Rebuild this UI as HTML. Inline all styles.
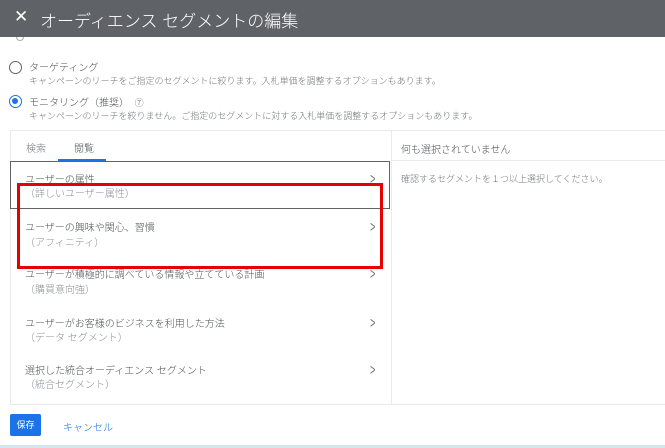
<!DOCTYPE html>
<html><head><meta charset="utf-8"><style>
*{margin:0;padding:0;box-sizing:border-box}
body{width:665px;height:448px;overflow:hidden;background:#fff;font-family:"Liberation Sans","Noto Sans CJK JP",sans-serif;position:relative;color:#3c4043}
.a{position:absolute;white-space:nowrap}
.hdr{left:0;top:0;width:665px;height:37px;background:#5f6368;color:#fff}
.s{font-size:9px;color:#6f7378;font-weight:300}
.t{font-size:10px;color:#4a4e52;font-weight:300}
.sub{font-size:10px;color:#8a8e93;font-weight:300}
.chev{font-size:16px;color:#6f7378;transform:scaleX(.55);font-weight:300}
</style></head><body>
<div class="a hdr"><span class="a" style="left:14px;top:7px;font-size:17px">✕</span><span class="a" style="left:40px;top:7px;font-size:17px;font-weight:300">オーディエンス セグメントの編集</span></div>
<div class="a" style="left:16px;top:37px;width:8px;height:4px;border:1px solid #aaa;border-top:none;border-radius:0 0 5px 5px"></div>
<div class="a" style="left:9px;top:61px;width:13px;height:13px;border:1.5px solid #5f6368;border-radius:50%"></div>
<div class="a t" style="left:29px;top:59px">ターゲティング</div>
<div class="a s" style="left:29px;top:74px">キャンペーンのリーチをご指定のセグメントに絞ります。入札単価を調整するオプションもあります。</div>
<div class="a" style="left:9px;top:95px;width:13px;height:13px;border:1.5px solid #1a73e8;border-radius:50%"><div style="margin:2px;width:6px;height:6px;background:#1a73e8;border-radius:50%"></div></div>
<div class="a t" style="left:29px;top:94px">モニタリング（推奨）&nbsp; <span style="font-size:9px;color:#5f6368">⑦</span></div>
<div class="a s" style="left:29px;top:109px">キャンペーンのリーチを絞りません。ご指定のセグメントに対する入札単価を調整するオプションもあります。</div>
<div class="a" style="left:10px;top:130px;width:655px;height:275px;border:1px solid #e8eaed;border-right:none"></div>
<div class="a" style="left:391px;top:130px;width:1px;height:275px;background:#e8eaed"></div>
<div class="a" style="left:391px;top:160px;width:274px;height:1px;background:#e8eaed"></div>
<div class="a sub" style="left:26px;top:140px;color:#6f7378">検索</div>
<div class="a t" style="left:74px;top:140px">閲覧</div>
<div class="a" style="left:58px;top:159px;width:48px;height:2px;background:#1a73e8"></div>
<div class="a t" style="left:401px;top:141px">何も選択されていません</div>
<div class="a s" style="left:401px;top:172px">確認するセグメントを１つ以上選択してください。</div>
<div class="a" style="left:10px;top:161px;width:380px;height:48px;border:1px solid #5f6368"></div>
<div class="a t" style="left:25px;top:171px">ユーザーの属性</div><div class="a sub" style="left:25px;top:185px">（詳しいユーザー属性）</div><div class="a chev" style="left:368px;top:171px">&gt;</div>
<div class="a t" style="left:25px;top:219px">ユーザーの興味や関心、習慣</div><div class="a sub" style="left:25px;top:234px">（アフィニティ）</div><div class="a chev" style="left:368px;top:219px">&gt;</div>
<div class="a t" style="left:25px;top:266px">ユーザーが積極的に調べている情報や立てている計画</div><div class="a sub" style="left:25px;top:281px">（購買意向強）</div><div class="a chev" style="left:368px;top:266px">&gt;</div>
<div class="a t" style="left:25px;top:315px">ユーザーがお客様のビジネスを利用した方法</div><div class="a sub" style="left:25px;top:329px">（データ セグメント）</div><div class="a chev" style="left:368px;top:315px">&gt;</div>
<div class="a t" style="left:25px;top:362px">選択した統合オーディエンス セグメント</div><div class="a sub" style="left:25px;top:376px">（統合セグメント）</div><div class="a chev" style="left:368px;top:362px">&gt;</div>
<div class="a" style="left:17px;top:183px;width:366px;height:86px;border:3.5px solid #e60000"></div>
<div class="a" style="left:10px;top:414px;width:31px;height:22px;background:#1a73e8;border-radius:2px;color:#fff;font-size:9px;text-align:center;line-height:22px">保存</div>
<div class="a" style="left:63px;top:419px;font-size:10px;color:#1a73e8;font-weight:300">キャンセル</div>
<div class="a" style="left:0;top:445px;width:665px;height:3px;background:#d6e6ee"></div>
</body></html>
